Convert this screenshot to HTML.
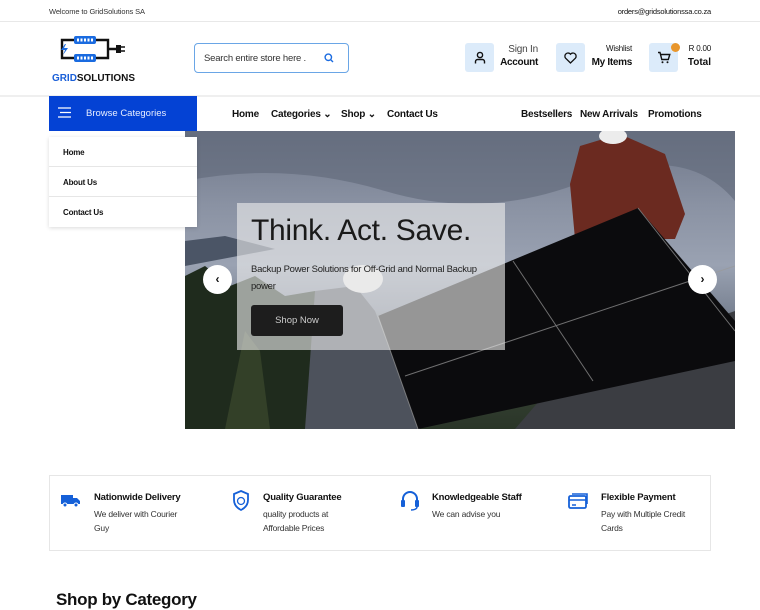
<!DOCTYPE html>
<html><head><meta charset="utf-8">
<style>
*{margin:0;padding:0;box-sizing:border-box}
body{width:760px;height:600px;overflow:hidden;background:#fff;font-family:"Liberation Sans",sans-serif;color:#111;position:relative}
.a{position:absolute;white-space:nowrap}
.b{font-weight:bold}
.ib{position:absolute;width:29px;height:29px;background:#dcebfa;border-radius:3px;display:flex;align-items:center;justify-content:center}
.nav{position:absolute;top:109px;font-size:10px;font-weight:bold;color:#111;letter-spacing:-.2px}
.mi{position:absolute;left:49px;width:148px;height:30px;border-bottom:1px solid #e6e6e6;font-size:8px;font-weight:bold;padding:11px 0 0 14px;background:#fff;letter-spacing:-.2px}
.ft{position:absolute;top:492px;font-size:9.5px;letter-spacing:-.2px}
.ft b{display:block;margin-bottom:4px}
.ft span{display:block;font-size:8.5px;color:#333;line-height:14px}
.r{text-align:right}
</style></head><body>
<div class="a" style="left:49px;top:7px;font-size:7.5px;color:#333;letter-spacing:-.1px">Welcome to GridSolutions SA</div>
<div class="a r" style="right:49px;top:7px;font-size:7.5px;color:#111;letter-spacing:-.2px">orders@gridsolutionssa.co.za</div>
<div class="a" style="left:0;top:21px;width:760px;height:1px;background:#e8e8e8"></div>

<svg class="a" style="left:52px;top:34px" width="84" height="50" viewBox="0 0 84 50">
<path d="M22 6H10v18h12M44 6h12v18H44M56 15h8" stroke="#111" stroke-width="2.4" fill="none"/>
<rect x="64" y="11" width="5" height="8" fill="#111"/><path d="M69 13h4M69 17h4" stroke="#111" stroke-width="1.5"/>
<rect x="22" y="2" width="22" height="8" rx="2" fill="#1a6be0"/><rect x="22" y="20" width="22" height="8" rx="2" fill="#1a6be0"/>
<path d="M25 6h16M25 24h16" stroke="#fff" stroke-width="3" stroke-dasharray="2 1.5"/>
<path d="M13 10l-4 6h4l-2 5 5-7h-4l2-4z" fill="#1a6be0"/>
<text x="0" y="47" font-family="Liberation Sans" font-weight="bold" font-size="10.5" textLength="83" lengthAdjust="spacingAndGlyphs" fill="#1a5fd8">GRID<tspan fill="#111">SOLUTIONS</tspan></text>
</svg>

<div class="a" style="left:194px;top:43px;width:155px;height:30px;border:1.5px solid #6aa6e6;border-radius:4px"></div>
<div class="a" style="left:204px;top:53px;font-size:9.5px;color:#333;letter-spacing:-.2px">Search entire store here .</div>
<svg class="a" style="left:324px;top:53px" width="10" height="10" viewBox="0 0 10 10"><circle cx="4.3" cy="4.3" r="3.2" stroke="#1a6be0" stroke-width="1.4" fill="none"/><path d="M6.6 6.6l2.4 2.4" stroke="#1a6be0" stroke-width="1.4"/></svg>

<div class="ib" style="left:465px;top:43px"><svg width="12" height="13" viewBox="0 0 12 13"><circle cx="6" cy="4" r="2.6" stroke="#111" stroke-width="1.4" fill="none"/><path d="M1.5 12.5v-2a2 2 0 0 1 2-2h5a2 2 0 0 1 2 2v2" stroke="#111" stroke-width="1.4" fill="none"/></svg></div>
<div class="a r" style="right:222px;top:44px;font-size:10px;color:#444;letter-spacing:-.2px">Sign In</div>
<div class="a b r" style="right:222px;top:57px;font-size:10px;letter-spacing:-.3px">Account</div>
<div class="ib" style="left:556px;top:43px"><svg width="13" height="12" viewBox="0 0 13 12"><path d="M6.5 11L1.6 6.2A2.8 2.8 0 0 1 6.5 2.2a2.8 2.8 0 0 1 4.9 4z" stroke="#111" stroke-width="1.3" fill="none"/></svg></div>
<div class="a r" style="right:128px;top:44px;font-size:8px;letter-spacing:-.2px">Wishlist</div>
<div class="a b r" style="right:128px;top:57px;font-size:10px;letter-spacing:-.3px">My Items</div>
<div class="ib" style="left:649px;top:43px"><svg width="14" height="13" viewBox="0 0 14 13"><path d="M1 1.5h2l1.8 7h6.5l1.5-5H4" stroke="#111" stroke-width="1.4" fill="none"/><circle cx="5.5" cy="11.3" r="1" fill="#111"/><circle cx="10.5" cy="11.3" r="1" fill="#111"/></svg></div>
<div class="a" style="left:671px;top:43px;width:9px;height:9px;border-radius:50%;background:#e8962c"></div>
<div class="a r" style="right:49px;top:44px;font-size:8px;letter-spacing:-.2px">R 0.00</div>
<div class="a b r" style="right:49px;top:57px;font-size:10px">Total</div>

<div class="a" style="left:0;top:95px;width:760px;height:2px;background:#efefef"></div>

<div class="a" style="left:49px;top:96px;width:148px;height:35px;background:#0442d4"></div>
<svg class="a" style="left:58px;top:107px" width="13" height="11"><path d="M0 1h13M2 5.5h11M0 10h13" stroke="#fff" stroke-width="1.2"/></svg>
<div class="a" style="left:86px;top:108px;font-size:9.5px;color:#e8eeff">Browse Categories</div>
<div class="nav" style="left:232px">Home</div>
<div class="nav" style="left:271px">Categories ⌄</div>
<div class="nav" style="left:341px">Shop ⌄</div>
<div class="nav" style="left:387px">Contact Us</div>
<div class="nav" style="left:521px">Bestsellers</div>
<div class="nav" style="left:580px">New Arrivals</div>
<div class="nav" style="left:648px">Promotions</div>

<div class="a" style="left:185px;top:131px;width:550px;height:298px;overflow:hidden;background:linear-gradient(180deg,#6f7789 0%,#8a92a3 25%,#9aa2b2 45%,#7b8494 60%,#3d4a3a 75%,#2a3528 100%)">
<svg width="550" height="298" viewBox="0 0 550 298" style="position:absolute;left:0;top:0">
<path d="M0 50Q100 30 200 60T400 50 550 70V0H0z" fill="#5f6778" opacity=".6"/>
<path d="M0 110L40 105 90 118 0 135z" fill="#4b5566"/>
<path d="M0 145L20 135 45 155 70 145 100 165 130 160 140 298H0z" fill="#1f2b1d"/>
<path d="M60 200l15 20 10 78H40z" fill="#334028"/>
<path d="M130 160l40 -5 20 25 45 118H120z" fill="#4d525c"/>
<ellipse cx="178" cy="148" rx="20" ry="14" fill="#e8e8e8"/>
<path d="M395 15l40 -12 45 20 20 60 -10 25H390l-5-55z" fill="#6b2a20"/>
<ellipse cx="428" cy="5" rx="14" ry="8" fill="#ececec"/>
<path d="M380 240l170 -60V298H330z" fill="#3b3d42"/>
<path d="M193 185L453 77 550 190 550 230 233 298z" fill="#0b0b0d"/>
<g stroke="#9a9a9a" stroke-width="1" opacity=".7"><path d="M193 185L233 298M453 77L550 200M328 130l80 120M220 245l330-110"/></g>
</svg>
<div class="a" style="left:52px;top:72px;width:268px;height:147px;background:rgba(235,235,235,.62)"></div>
<div class="a" style="left:66px;top:83px;font-size:30px;color:#1a1a1a;letter-spacing:-.3px">Think. Act. Save.</div>
<div class="a" style="left:66px;top:130px;font-size:9.5px;color:#222;line-height:17px;white-space:normal;width:250px;letter-spacing:-.25px">Backup Power Solutions for Off-Grid and Normal Backup power</div>
<div class="a" style="left:66px;top:174px;width:92px;height:31px;background:#1d1d1d;border-radius:3px;color:#ccc;font-size:9.5px;text-align:center;line-height:31px">Shop Now</div>
<div class="a" style="left:18px;top:134px;width:29px;height:29px;border-radius:50%;background:#fff;text-align:center;line-height:29px;font-size:12px;font-weight:bold">‹</div>
<div class="a" style="left:503px;top:134px;width:29px;height:29px;border-radius:50%;background:#fff;text-align:center;line-height:29px;font-size:12px;font-weight:bold">›</div>
</div>

<div class="a" style="left:49px;top:137px;width:148px;height:90px;box-shadow:0 1px 4px rgba(0,0,0,.15);background:#fff"></div>
<div class="mi" style="top:137px">Home</div>
<div class="mi" style="top:167px">About Us</div>
<div class="mi" style="top:197px;border:none">Contact Us</div>

<div class="a" style="left:49px;top:475px;width:662px;height:76px;border:1px solid #e6e6e6"></div>
<svg class="a" style="left:60px;top:493px" width="22" height="15" viewBox="0 0 22 15"><path d="M1 2h12v9H1zM13 5h4l3 3v3h-7z" fill="#1560d8"/><circle cx="5" cy="12" r="2" fill="#1560d8" stroke="#fff"/><circle cx="16" cy="12" r="2" fill="#1560d8" stroke="#fff"/></svg>
<div class="ft" style="left:94px"><b>Nationwide Delivery</b><span>We deliver with Courier<br>Guy</span></div>
<svg class="a" style="left:232px;top:490px" width="18" height="22" viewBox="0 0 18 22"><path d="M9 1l7 3v6c0 5-3 8-7 10-4-2-7-5-7-10V4z" stroke="#1560d8" stroke-width="1.8" fill="none"/><circle cx="9" cy="11" r="3.5" stroke="#1560d8" stroke-width="1.3" fill="none"/></svg>
<div class="ft" style="left:263px"><b>Quality Guarantee</b><span>quality products at<br>Affordable Prices</span></div>
<svg class="a" style="left:400px;top:490px" width="20" height="22" viewBox="0 0 20 22"><path d="M3 11V9a7 7 0 0 1 14 0v2" stroke="#1560d8" stroke-width="2" fill="none"/><rect x="1" y="10" width="4" height="7" rx="1" fill="#1560d8"/><rect x="15" y="10" width="4" height="7" rx="1" fill="#1560d8"/><path d="M17 17c0 2-3 3-6 3" stroke="#1560d8" stroke-width="1.5" fill="none"/></svg>
<div class="ft" style="left:432px"><b>Knowledgeable Staff</b><span>We can advise you</span></div>
<svg class="a" style="left:568px;top:492px" width="21" height="18" viewBox="0 0 21 18"><rect x="1" y="4" width="17" height="12" rx="1.5" stroke="#1560d8" stroke-width="1.8" fill="none"/><path d="M1 8h17M4 13h4M4 2h15v10" stroke="#1560d8" stroke-width="1.6" fill="none"/></svg>
<div class="ft" style="left:601px"><b>Flexible Payment</b><span>Pay with Multiple Credit<br>Cards</span></div>

<div class="a b" style="left:56px;top:590px;font-size:17px;color:#111;letter-spacing:-.3px">Shop by Category</div>
</body></html>
